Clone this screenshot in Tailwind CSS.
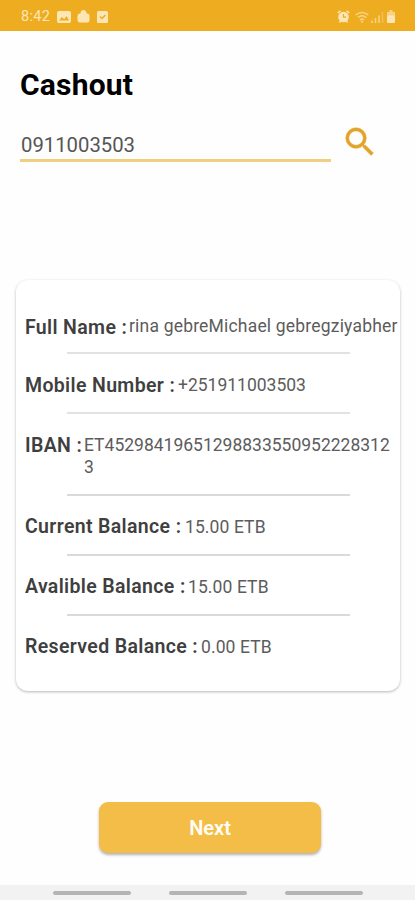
<!DOCTYPE html>
<html lang="en">
<head>
  <meta charset="UTF-8" />
  <meta name="viewport" content="width=device-width, initial-scale=1.0"/>
  <title>Cashout</title>
  <script src="https://cdn.jsdelivr.net/npm/@tailwindcss/browser@4"></script>
</head>
<body class="bg-[#fefefe] font-[Roboto,sans-serif]">
  <div class="flex flex-col w-[415px] h-[900px] overflow-hidden">

    <!-- Status bar -->
    <header class="flex items-center h-[31px] pt-[2px] pl-[21px] pr-[19px] bg-[#eeac20] text-[#fde6b4]">
      <span class="text-[14.5px] leading-none w-[36px] mt-[2px] tracking-[0.3px]">8:42</span>
      <svg class="w-[14px] h-[12px]" viewBox="0 0 14 12">
        <rect width="14" height="12" rx="2" fill="currentColor"/>
        <path d="M2 9.500 5 6l2.200 2.200L9.500 5l2.500 4.500z" fill="#eeac20"/>
      </svg>
      <svg class="w-[13px] h-[13px] ml-[6px]" viewBox="0 0 13 13">
        <path d="M4 4V2.500a2.500 2 0 0 1 5 0V4" fill="currentColor" stroke="currentColor"/>
        <rect x=".500" y="3.500" width="12" height="9" rx="2.500" fill="currentColor"/>
      </svg>
      <svg class="w-[11px] h-[12px] ml-[7px]" viewBox="0 0 11 12">
        <rect width="11" height="12" rx="1.500" fill="currentColor"/>
        <path d="m3 5.500 2 2L8.500 4" fill="none" stroke="#eeac20" stroke-width="1.500"/>
      </svg>
      <div class="flex items-center ml-auto">
        <svg class="w-[13px] h-[13px]" viewBox="0 0 13 13">
          <circle cx="6.500" cy="7" r="5.300" fill="currentColor"/>
          <path d="M.700 3 3.500.800M12.300 3 9.500.800M2.500 12.500 4 10.500M10.500 12.500 9 10.500" stroke="currentColor" stroke-width="1.500"/>
          <path d="M6.500 4v3.200h2.500" fill="none" stroke="#eeac20" stroke-width="1.200"/>
        </svg>
        <svg class="w-[14px] h-[12px] ml-[5px] text-[#f9d586]" viewBox="0 0 14 12" fill="none" stroke="currentColor" stroke-width="1.500">
          <path d="M.700 4q6.300-5 12.600 0M2.700 6.500q4.300-3.500 8.600 0M5 9q2-1.700 4 0"/>
          <path d="M7 11.500V10" stroke-width="2"/>
        </svg>
        <svg class="w-[13px] h-[12px] ml-[2px] text-[#f9d586]" viewBox="0 0 13 12" stroke="currentColor" stroke-width="1.500">
          <path d="M1 12V9.500M4.500 12V7M8 12V4.500"/>
          <path d="M11.500 12V1" opacity=".5"/>
        </svg>
        <svg class="w-[8px] h-[13px] ml-[3px] mr-[1px]" viewBox="0 0 8 13" fill="currentColor">
          <path d="M2.500 0h3v2H8v4H0V2h2.500z" opacity=".65"/>
          <path d="M0 5.500h8V12a1 1 0 0 1-1 1H1a1 1 0 0 1-1-1z"/>
        </svg>
      </div>
    </header>

    <h1 class="mt-[36px] ml-[20px] text-[30px] tracking-[0.2px] leading-[36px] font-bold text-black">Cashout</h1>

    <!-- Phone search -->
    <div class="flex mt-[21px] ml-5">
      <div class="flex items-center w-[311px] h-[38px] pt-[7px] pl-px border-b-[3px] border-[#f0d080] text-[20.3px] text-[#555]">0911003503</div>
      <svg class="w-[38px] h-[38px] ml-[10px] -mt-px" viewBox="0 0 24 24" fill="#e2a42a" stroke="#e2a42a" stroke-width="0.300">
        <path d="M15.500 14h-.790l-.280-.270A6.471 6.471 0 0 0 16 9.500 6.500 6.500 0 1 0 9.500 16c1.610 0 3.090-.590 4.230-1.570l.270.280v.790l5 4.990L20.490 19l-4.990-5zm-6 0C7.010 14 5 11.990 5 9.500S7.010 5 9.500 5 14 7.010 14 9.500 11.990 14 9.500 14z"/>
      </svg>
    </div>

    <!-- Account details -->
    <main class="flex flex-col w-[384px] h-[411px] ml-4 mt-[118px] pt-[22px] pl-[9px] rounded-xl bg-white shadow-[0_1px_3px_rgba(0,0,0,0.28)] text-[17.5px] text-[#5c5c5c] leading-[22px]">
      <div class="flex h-[50px] pt-[14px]">
        <b class="mt-px font-semibold text-[19.5px] tracking-[0.35px] text-[#3f3f3f] whitespace-nowrap w-[104px]">Full Name :</b>
        <span class="whitespace-nowrap -mt-px tracking-[0.19px]">rina gebreMichael gebregziyabher</span>
      </div>
      <div class="w-[283px] h-[2px] ml-[42px] bg-[#e2e2e2]"></div>
      <div class="flex h-[58px] pt-[20px]">
        <b class="mt-px font-semibold text-[19.5px] tracking-[0.35px] text-[#3f3f3f] whitespace-nowrap w-[153px]">Mobile Number :</b>
        <span>+251911003503</span>
      </div>
      <div class="w-[283px] h-[2px] ml-[42px] bg-[#e2e2e2]"></div>
      <div class="flex h-[80px] pt-[20px]">
        <b class="mt-px font-semibold text-[19.5px] tracking-[0.35px] text-[#3f3f3f] whitespace-nowrap w-[59px]">IBAN :</b>
        <span class="w-[308px] break-all">ET452984196512988335509522283123</span>
      </div>
      <div class="w-[283px] h-[2px] ml-[42px] bg-[#dadada]"></div>
      <div class="flex h-[58px] pt-[19px]">
        <b class="mt-px font-semibold text-[19.5px] tracking-[0.35px] text-[#3f3f3f] whitespace-nowrap w-[160px]">Current Balance :</b>
        <span class="mt-px tracking-[0.1px]">15.00 ETB</span>
      </div>
      <div class="w-[283px] h-[2px] ml-[42px] bg-[#dadada]"></div>
      <div class="flex h-[58px] pt-[19px]">
        <b class="mt-px font-semibold text-[19.5px] tracking-[0.35px] text-[#3f3f3f] whitespace-nowrap w-[163px]">Avalible Balance :</b>
        <span class="mt-px tracking-[0.1px]">15.00 ETB</span>
      </div>
      <div class="w-[283px] h-[2px] ml-[42px] bg-[#dadada]"></div>
      <div class="flex pt-[19px]">
        <b class="mt-px font-semibold text-[19.5px] tracking-[0.35px] text-[#3f3f3f] whitespace-nowrap w-[176px]">Reserved Balance :</b>
        <span class="mt-px tracking-[0.1px]">0.00 ETB</span>
      </div>
    </main>

    <button class="w-[222px] h-[51px] ml-[99px] mt-[111px] pt-px rounded-[9px] bg-[#f4bd48] text-[#fffdf5] text-[20px] font-semibold shadow-[0_2px_3px_rgba(0,0,0,0.3)]">Next</button>

    <!-- Navigation bar -->
    <nav class="flex justify-center gap-[38px] h-[15px] mt-auto pt-[6px] bg-[#f2f2f2]">
      <i class="w-[78px] h-[4px] rounded-full bg-[#b4b4b4]"></i>
      <i class="w-[78px] h-[4px] rounded-full bg-[#b4b4b4]"></i>
      <i class="w-[78px] h-[4px] rounded-full bg-[#b4b4b4]"></i>
    </nav>
  </div>
</body>
</html>
